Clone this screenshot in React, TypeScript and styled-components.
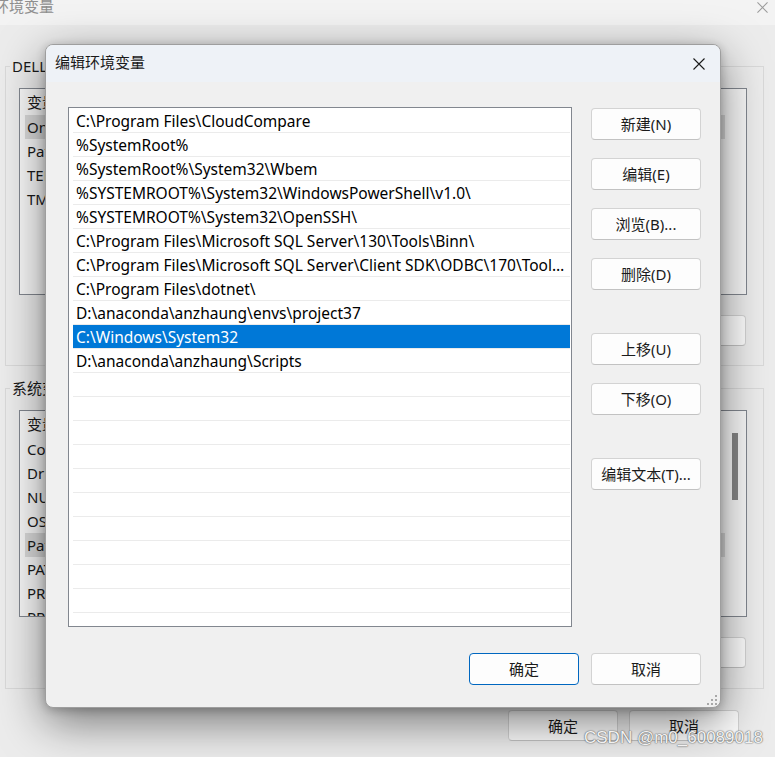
import React from "react";
import styled, { createGlobalStyle } from "styled-components";

const FONT = `"Noto Sans", "Noto Sans CJK SC", sans-serif`;

const GlobalStyle = createGlobalStyle`
  html, body { margin: 0; padding: 0; background: #ededed; }
  body { width: 775px; height: 757px; overflow: hidden; font-family: ${FONT}; }
  * { box-sizing: border-box; }
`;

/* ---------- background window ---------- */
const Window = styled.div`
  position: relative;
  width: 775px;
  height: 757px;
  overflow: hidden;
  background: #ececec;
  display: flex;
  flex-direction: column;
  font-family: ${FONT};
  font-size: 15px;
  color: #1a1a1a;
`;

const WinTitleBar = styled.div`
  height: 25px;
  flex: none;
  background: #f3f3f3;
  display: flex;
  align-items: flex-start;
  justify-content: space-between;
`;

const WinTitle = styled.span`
  margin-left: -6px;
  margin-top: -4px;
  line-height: 20px;
  color: #8f8f8f;
  font-size: 15px;
`;

const WinClose = styled.span`
  margin-right: 7px;
  margin-top: 2px;
  display: flex;
`;

const WinBody = styled.div`
  flex: 1;
  display: flex;
  flex-direction: column;
  padding: 0 11px 0 5px;
`;

const Group = styled.fieldset<{ $top: number; $bottom: number }>`
  margin: ${(p) => p.$top}px 0 0 0;
  padding: 12px 16px ${(p) => p.$bottom}px 13px;
  border: 1px solid #d9d9d9;
  min-width: 0;
  display: flex;
  flex-direction: column;
`;

const Legend = styled.legend`
  padding: 0 2px;
  margin-left: -9px;
  line-height: 20px;
  font-size: 15px;
  color: #1a1a1a;
`;

const BgList = styled.div`
  height: 207px;
  border: 1px solid #82878f;
  background: #f8f8f8;
  display: flex;
  overflow: hidden;
`;

const BgRows = styled.div`
  flex: 1;
  display: flex;
  flex-direction: column;
  align-items: flex-start;
  padding: 0 0 0 5px;
`;

const BgHeader = styled.div`
  height: 26px;
  line-height: 26px;
  padding-left: 2px;
  white-space: nowrap;
`;

const BgRow = styled.div<{ $sel?: boolean }>`
  width: 700px;
  height: 24px;
  line-height: 24px;
  padding-left: 2px;
  white-space: nowrap;
  background: ${(p) => (p.$sel ? "#dadada" : "transparent")};
`;

const ScrollTrack = styled.div`
  width: 20px;
  flex: none;
  padding: 22px 0 0 6px;
`;

const Thumb = styled.div`
  width: 6px;
  height: 67px;
  background: #868686;
`;

const BgButtonRow = styled.div`
  display: flex;
  justify-content: flex-end;
  gap: 11px;
  margin-top: 20px;
  padding-right: 1px;
`;

const BottomBar = styled.div`
  display: flex;
  justify-content: flex-end;
  gap: 11px;
  margin-top: 21px;
  padding-right: 25px;
`;

/* ---------- buttons ---------- */
const Button = styled.button<{ $primary?: boolean; $h?: number }>`
  width: 110px;
  height: ${(p) => p.$h ?? 32}px;
  padding: 0;
  background: #fdfdfd;
  border: 1px solid ${(p) => (p.$primary ? "#0067c0" : "#d3d3d3")};
  border-bottom-color: ${(p) => (p.$primary ? "#0067c0" : "#c2c2c2")};
  border-radius: 4px;
  font-family: ${FONT};
  font-size: 15px;
  line-height: 20px;
  color: #1b1b1b;
  white-space: nowrap;
`;

/* ---------- dialog ---------- */
const Dialog = styled.div`
  position: absolute;
  left: 45px;
  top: 44px;
  width: 676px;
  height: 664px;
  border: 1px solid #9e9e9e;
  border-radius: 8px;
  background: #f0f0f0;
  overflow: hidden;
  display: flex;
  flex-direction: column;
  box-shadow: 0 14px 46px rgba(0, 0, 0, 0.5), 0 2px 10px rgba(0, 0, 0, 0.22);
`;

const TitleBar = styled.div`
  height: 37px;
  flex: none;
  background: #eef2f7;
  display: flex;
  align-items: center;
  justify-content: space-between;
  padding: 0 15px 3px 9px;
`;

const Title = styled.span`
  font-size: 15px;
  line-height: 20px;
  color: #1a1a1a;
`;

const CloseBtn = styled.span`
  display: flex;
  margin-top: 3px;
`;

const DialogBody = styled.div`
  flex: 1;
  display: flex;
  flex-direction: column;
  padding: 25px 19px 22px 22px;
`;

const MainRow = styled.div`
  display: flex;
  gap: 19px;
`;

const ListBox = styled.div`
  width: 504px;
  height: 520px;
  flex: none;
  border: 1px solid #82878f;
  background: #ffffff;
  padding: 1px 1px 0 4px;
  overflow: hidden;
  display: flex;
  flex-direction: column;
`;

const Row = styled.div<{ $sel?: boolean }>`
  height: 24px;
  flex: none;
  border-bottom: 1px solid #ebebeb;
  padding: 1px 4px 0 3px;
  line-height: 22px;
  font-size: 15.5px;
  white-space: nowrap;
  overflow: hidden;
  text-overflow: ellipsis;
  color: ${(p) => (p.$sel ? "#ffffff" : "#000000")};
  background: ${(p) => (p.$sel ? "#0078d7" : "transparent")};
  background-clip: padding-box;
`;

const ButtonCol = styled.div`
  display: flex;
  flex-direction: column;
  gap: 43px;
  padding-top: 1px;
`;

const ButtonGroup = styled.div`
  display: flex;
  flex-direction: column;
  gap: 18px;
`;

const Footer = styled.div`
  display: flex;
  justify-content: flex-end;
  gap: 12px;
  margin-top: 26px;
`;

const Grip = styled.span`
  position: absolute;
  right: 2px;
  bottom: 1px;
  display: flex;
`;

const Watermark = styled.div`
  position: absolute;
  left: 584px;
  top: 727px;
  font-family: "Liberation Sans", Arial, sans-serif;
  font-size: 17px;
  line-height: 22px;
  color: rgba(255, 255, 255, 0.92);
  text-shadow: 0 0 1px #6e6e6e, 0 0 1px #6e6e6e, 0 0 2px rgba(0, 0, 0, 0.35);
  white-space: nowrap;
`;

const XIcon = ({ size, color }: { size: number; color: string }) => (
  <svg width={size} height={size} viewBox="0 0 12 12">
    <path d="M0.5 0.5 L11.5 11.5 M11.5 0.5 L0.5 11.5" stroke={color} strokeWidth="1.1" fill="none" />
  </svg>
);

const GripIcon = () => (
  <svg width="12" height="12" viewBox="0 0 12 12">
    {[
      [8, 0],
      [4, 4],
      [8, 4],
      [0, 8],
      [4, 8],
      [8, 8],
    ].map(([x, y], i) => (
      <rect key={i} x={x + 1} y={y + 1} width="2" height="2" fill="#a8a8a8" />
    ))}
  </svg>
);

const paths = [
  "C:\\Program Files\\CloudCompare",
  "%SystemRoot%",
  "%SystemRoot%\\System32\\Wbem",
  "%SYSTEMROOT%\\System32\\WindowsPowerShell\\v1.0\\",
  "%SYSTEMROOT%\\System32\\OpenSSH\\",
  "C:\\Program Files\\Microsoft SQL Server\\130\\Tools\\Binn\\",
  "C:\\Program Files\\Microsoft SQL Server\\Client SDK\\ODBC\\170\\Tools\\Binn\\",
  "C:\\Program Files\\dotnet\\",
  "D:\\anaconda\\anzhaung\\envs\\project37",
  "C:\\Windows\\System32",
  "D:\\anaconda\\anzhaung\\Scripts",
];

const rows: string[] = [...paths, ...Array.from({ length: 12 }, () => "")];

const userVars = ["OneDrive", "Path", "TEMP", "TMP"];
const sysVars = [
  "ComSpec",
  "DriverData",
  "NUMBER_OF_PROCESSORS",
  "OS",
  "Path",
  "PATHEXT",
  "PROCESSOR_ARCHITECTURE",
  "PROCESSOR_IDENTIFIER",
];

export default function App() {
  return (
    <>
      <GlobalStyle />
      <Window>
        <WinTitleBar>
          <WinTitle>环境变量</WinTitle>
          <WinClose>
            <XIcon size={11} color="#9a9a9a" />
          </WinClose>
        </WinTitleBar>
        <WinBody>
          <Group $top={31} $bottom={19}>
            <Legend>DELL 的用户变量(U)</Legend>
            <BgList>
              <BgRows>
                <BgHeader>变量</BgHeader>
                {userVars.map((v, i) => (
                  <BgRow key={v} $sel={i === 0}>
                    {v}
                  </BgRow>
                ))}
              </BgRows>
            </BgList>
            <BgButtonRow>
              <Button $h={31}>新建(N)...</Button>
              <Button $h={31}>编辑(E)...</Button>
              <Button $h={31}>删除(D)</Button>
            </BgButtonRow>
          </Group>
          <Group $top={12} $bottom={20}>
            <Legend>系统变量(S)</Legend>
            <BgList>
              <BgRows>
                <BgHeader>变量</BgHeader>
                {sysVars.map((v) => (
                  <BgRow key={v} $sel={v === "Path"}>
                    {v}
                  </BgRow>
                ))}
              </BgRows>
              <ScrollTrack>
                <Thumb />
              </ScrollTrack>
            </BgList>
            <BgButtonRow>
              <Button $h={31}>新建(W)...</Button>
              <Button $h={31}>编辑(I)...</Button>
              <Button $h={31}>删除(L)</Button>
            </BgButtonRow>
          </Group>
          <BottomBar>
            <Button $h={31}>确定</Button>
            <Button $h={31}>取消</Button>
          </BottomBar>
        </WinBody>

        <Dialog>
          <TitleBar>
            <Title>编辑环境变量</Title>
            <CloseBtn>
              <XIcon size={12} color="#1a1a1a" />
            </CloseBtn>
          </TitleBar>
          <DialogBody>
            <MainRow>
              <ListBox>
                {rows.map((r, i) => (
                  <Row key={i} $sel={i === 9}>
                    {r}
                  </Row>
                ))}
              </ListBox>
              <ButtonCol>
                <ButtonGroup>
                  <Button>新建(N)</Button>
                  <Button>编辑(E)</Button>
                  <Button>浏览(B)...</Button>
                  <Button>删除(D)</Button>
                </ButtonGroup>
                <ButtonGroup>
                  <Button>上移(U)</Button>
                  <Button>下移(O)</Button>
                </ButtonGroup>
                <ButtonGroup>
                  <Button>编辑文本(T)...</Button>
                </ButtonGroup>
              </ButtonCol>
            </MainRow>
            <Footer>
              <Button $primary>确定</Button>
              <Button>取消</Button>
            </Footer>
          </DialogBody>
          <Grip>
            <GripIcon />
          </Grip>
        </Dialog>
        <Watermark>CSDN @m0_60089018</Watermark>
      </Window>
    </>
  );
}
